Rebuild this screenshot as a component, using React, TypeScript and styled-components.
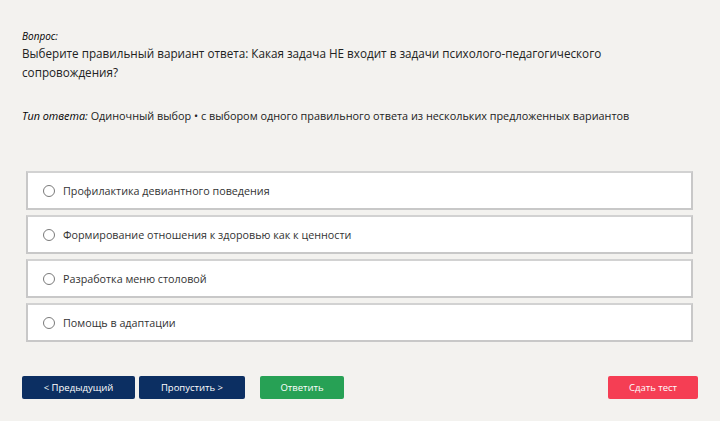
import styled, { createGlobalStyle } from 'styled-components';

const GlobalStyle = createGlobalStyle`
  html, body {
    margin: 0;
    padding: 0;
    background: #f3f2ef;
  }
  body {
    font-family: 'Open Sans', 'Noto Sans', sans-serif;
    color: #222;
  }
`;

const options = [
  'Профилактика девиантного поведения',
  'Формирование отношения к здоровью как к ценности',
  'Разработка меню столовой',
  'Помощь в адаптации',
];

const App = () => {
  return (
    <>
      <GlobalStyle />
      <Page>
        <Label>Вопрос:</Label>
        <QuestionText>
          Выберите правильный вариант ответа: Какая задача НЕ входит в задачи психолого-педагогического
          сопровождения?
        </QuestionText>
        <AnswerType>
          <Label as="span">Тип ответа:</Label> Одиночный выбор • с выбором одного правильного ответа из
          нескольких предложенных вариантов
        </AnswerType>
        <OptionList>
          {options.map((text) => (
            <Option key={text}>
              <Radio type="radio" name="answer" />
              <span>{text}</span>
            </Option>
          ))}
        </OptionList>
        <Toolbar>
          <Button $color="#0c2f62" $width={113}>&lt; Предыдущий</Button>
          <Button $color="#0c2f62" $width={106}>Пропустить &gt;</Button>
          <Button $color="#27a155" $width={84} $gapBefore={11}>
            Ответить
          </Button>
          <Spacer />
          <Button $color="#f53e54" $width={90}>Сдать тест</Button>
        </Toolbar>
      </Page>
    </>
  );
};

export default App;

const Page = styled.main`
  box-sizing: border-box;
  width: 720px;
  height: 421px;
  padding: 29px 22px 0 22px;
`;

const Label = styled.div`
  font-style: italic;
  font-weight: 500;
  font-size: 10px;
  line-height: 14px;
  color: #000;
`;

const QuestionText = styled.p`
  margin: 1px 0 0;
  font-size: 11.7px;
  line-height: 19px;
  color: #222;
`;

const AnswerType = styled.p`
  margin: 26px 0 0;
  font-size: 10.85px;
  line-height: 16px;
  color: #222;

  span {
    display: inline;
    font-size: 10.85px;
  }
`;

const OptionList = styled.div`
  display: flex;
  flex-direction: column;
  gap: 5px;
  margin: 47px 5px 0 4px;
`;

const Option = styled.label`
  box-sizing: border-box;
  height: 39px;
  display: flex;
  align-items: center;
  gap: 8px;
  padding-left: 15px;
  background: #fff;
  border: 2px solid #c8c8c8;
  border-top-color: #d2d2d2;
  font-size: 10.75px;
  color: #333;
  cursor: pointer;
`;

const Radio = styled.input`
  appearance: none;
  margin: 0;
  width: 12px;
  height: 12px;
  border: 1px solid #7a7a7a;
  border-radius: 50%;
  background: #fff;
`;

const Toolbar = styled.div`
  display: flex;
  align-items: center;
  gap: 4px;
  margin-top: 34px;
`;

const Spacer = styled.div`
  flex: 1;
`;

const Button = styled.button<{ $color: string; $width: number; $gapBefore?: number }>`
  box-sizing: border-box;
  width: ${(p) => p.$width}px;
  height: 23px;
  margin-left: ${(p) => p.$gapBefore ?? 0}px;
  border: none;
  border-radius: 2px;
  background: ${(p) => p.$color};
  color: #fff;
  font-family: 'Open Sans', 'Noto Sans', sans-serif;
  font-size: 9.5px;
  padding: 0;
  cursor: pointer;
`;
